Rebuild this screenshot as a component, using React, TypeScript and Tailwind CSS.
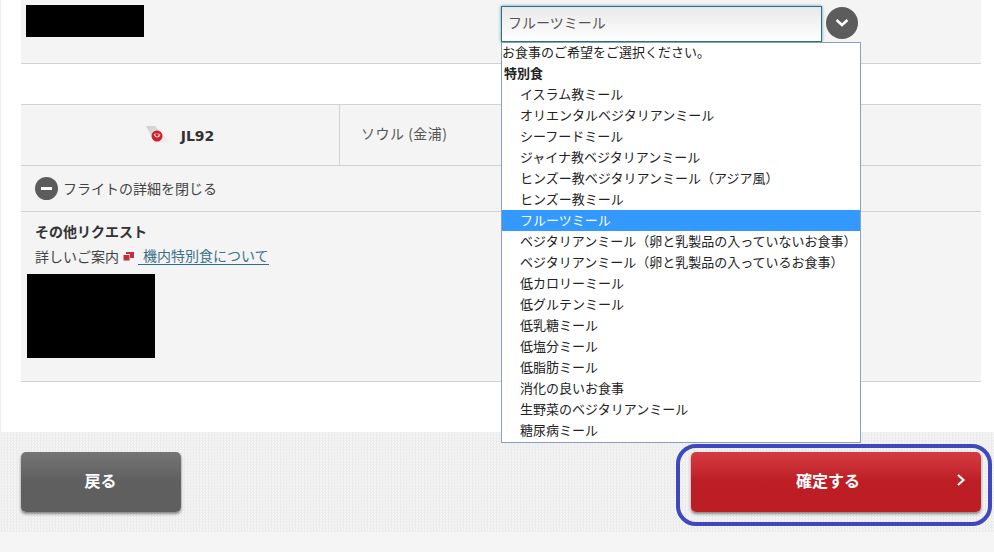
const meals = [
  'イスラム教ミール',
  'オリエンタルベジタリアンミール',
  'シーフードミール',
  'ジャイナ教ベジタリアンミール',
  'ヒンズー教ベジタリアンミール（アジア風）',
  'ヒンズー教ミール',
  'フルーツミール',
  'ベジタリアンミール（卵と乳製品の入っていないお食事）',
  'ベジタリアンミール（卵と乳製品の入っているお食事）',
  '低カロリーミール',
  '低グルテンミール',
  '低乳糖ミール',
  '低塩分ミール',
  '低脂肪ミール',
  '消化の良いお食事',
  '生野菜のベジタリアンミール',
  '糖尿病ミール',
];

const TailLogo = () => (
  <svg width="26" height="20" viewBox="0 0 26 20" className="shrink-0">
    <defs>
      <linearGradient id="tail" x1="0" y1="0" x2="1" y2="1">
        <stop offset="0" stopColor="#cfcfcf" />
        <stop offset="1" stopColor="#f4f4f4" />
      </linearGradient>
    </defs>
    <path d="M0 1 L9 1 L25 18 L9 18 Z" fill="url(#tail)" />
    <circle cx="11" cy="11" r="5.5" fill="#cf2030" />
    <path d="M7.5 9.5 Q11 7 14.5 9.5 Q14 12 11.5 12.5 Q8.5 12 7.5 9.5 Z" fill="#f6cfd2" />
    <circle cx="11" cy="9.8" r="1.6" fill="#cf2030" />
  </svg>
);

export default function App() {
  return (
    <div className="relative h-[552px] w-[994px] overflow-hidden bg-[#f5f5f5] font-['Noto_Sans_CJK_JP','Liberation_Sans',sans-serif] text-[14px] text-[#333]">
      <div className="h-[432px] border-l border-[#eeeeee] bg-white pl-5 pr-[13px]">
        <div className="flex h-[64px] border-b border-[#d2d2d2] bg-[#f4f4f4]">
          <div className="ml-[5px] mt-[5px] h-[32px] w-[118px] bg-black" />
          <div className="relative ml-[357px] mt-[6px] flex h-[36px] items-start">
            <div className="flex h-[36px] w-[321px] items-center border border-[#2f6f86] bg-gradient-to-b from-[#e9e9e9] to-white pb-[3px] pl-[6px] text-[#555] shadow-[0_0_3px_#5d9ab0]">
              フルーツミール
            </div>
            <div className="ml-[4px] mt-px flex h-8 w-8 items-center justify-center rounded-full bg-[#5c5c5c]">
              <svg width="16" height="12" viewBox="0 0 16 12">
                <path d="M2.5 3 L8 8 L13.5 3" fill="none" stroke="white" strokeWidth="2.6" />
              </svg>
            </div>
            <div className="absolute left-0 top-[36px] z-10 h-[401px] w-[360px] border border-[#8aa0bd] bg-white text-[13px] leading-[19px] text-[#222]">
              <div className="h-[20px] leading-[17px]">お食事のご希望をご選択ください。</div>
              <div className="h-[21px] pl-[2px] font-bold">特別食</div>
              {meals.map((meal) => (
                <div
                  key={meal}
                  className={
                    meal === 'フルーツミール'
                      ? 'h-[21px] whitespace-nowrap bg-[#3399ff] pl-[18px] text-white'
                      : 'h-[21px] whitespace-nowrap pl-[18px]'
                  }
                >
                  {meal}
                </div>
              ))}
            </div>
          </div>
        </div>

        <div className="mt-[40px] flex h-[62px] border-y border-[#d2d2d2] bg-[#f4f4f4]">
          <div className="flex w-[319px] items-center justify-center gap-[9px] border-r border-[#d2d2d2]">
            <TailLogo />
            <span className="mt-[3px] font-['DejaVu_Sans',sans-serif] text-[14px] font-bold text-[#333]">JL92</span>
          </div>
          <div className="flex items-center pb-[3px] pl-[21px] tracking-[0.5px] text-[#555]">ソウル (金浦)</div>
        </div>

        <div className="flex h-[46px] items-center gap-[5px] border-b border-[#d2d2d2] bg-[#f4f4f4] pl-[14px] text-[#444]">
          <div className="flex h-[23px] w-[23px] items-center justify-center rounded-full bg-[#5c5c5c]">
            <div className="h-[3px] w-[11px] bg-white" />
          </div>
          フライトの詳細を閉じる
        </div>

        <div className="h-[170px] border-b border-[#d2d2d2] bg-[#f4f4f4]">
          <div className="pl-[14px] pt-[9px] text-[14px] font-bold leading-[21px] text-[#333]">その他リクエスト</div>
          <div className="mt-[2px] flex h-[24px] items-center pl-[14px] text-[14px] text-[#444]">
            詳しいご案内
            <svg width="11" height="9" viewBox="0 0 11 9" className="ml-[4px]">
              <rect x="3" y="0" width="8" height="6" fill="#c0303a" />
              <rect x="0" y="2" width="7" height="7" fill="#f4f4f4" />
              <rect x="0.5" y="3" width="6" height="5.5" fill="#c0303a" />
            </svg>
            <a className="ml-[4px] border-b border-[#2f6f86] pl-[5px] leading-[17px] text-[#3b7286]">機内特別食について</a>
          </div>
          <div className="ml-[6px] mt-[6px] h-[84px] w-[128px] bg-black" />
        </div>
      </div>

      <div className="flex h-[100px] items-start justify-between bg-[#f0f0f0] bg-[repeating-conic-gradient(#ebebeb_0_25%,#f5f5f5_0_50%)] bg-[length:3px_3px] pl-[21px] pr-[13px] pt-5">
        <button className="h-[60px] w-[160px] rounded-[5px] bg-gradient-to-b from-[#757575] via-[#5f5f5f] to-[#5f5f5f] pb-[4px] pr-px text-[16px] font-bold text-white shadow-[0_2px_3px_rgba(0,0,0,0.45)]">
          戻る
        </button>
        <div className="relative">
          <button className="relative h-[60px] w-[290px] rounded-[5px] bg-gradient-to-b from-[#d63a42] via-[#bd1d24] to-[#bd1d24] pb-[4px] pr-[16px] text-[16px] font-bold text-white shadow-[0_2px_3px_rgba(0,0,0,0.45)]">
            確定する
            <svg width="10" height="14" viewBox="0 0 10 14" className="absolute right-[15px] top-[21px]">
              <path d="M2 2 L7.5 7 L2 12" fill="none" stroke="white" strokeWidth="2.2" />
            </svg>
          </button>
          <div className="absolute -bottom-[14px] -left-[15px] -right-[11px] -top-[8px] rounded-[20px] border-[4px] border-[#3f48bd]" />
        </div>
      </div>
    </div>
  );
}
